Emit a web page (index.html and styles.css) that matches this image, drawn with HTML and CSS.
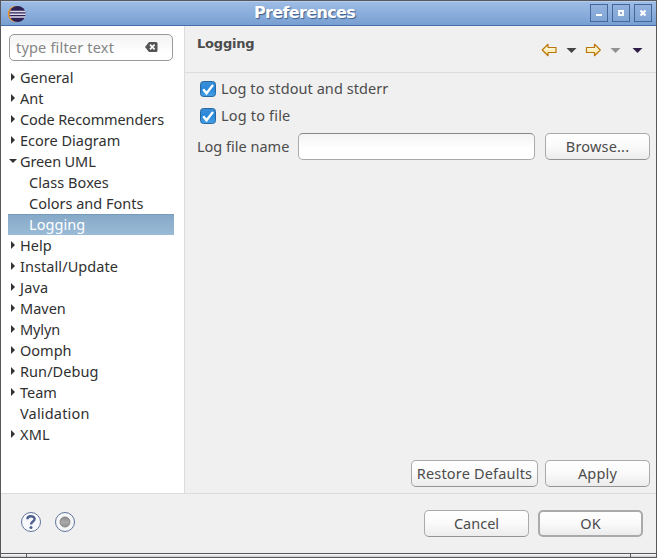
FILE: index.html
```html
<!DOCTYPE html>
<html lang="en">
<head>
<meta charset="utf-8">
<title>Preferences</title>
<link rel="stylesheet" href="styles.css">
</head>
<body>
<div class="window">
  <header class="titlebar">
    <svg class="app-icon" width="20" height="18" viewBox="0 0 20 18"><circle cx="8.800" cy="9" r="8" fill="#e8952f"/><circle cx="10.500" cy="9" r="8.100" fill="#2c2255"/><path d="M3 6.500h15.300M2.500 9.300h16.200M3 12.100h15.300" stroke="#ddd9eb" stroke-width="1.500"/></svg>
    <h1 class="title">Preferences</h1>
    <div class="controls">
      <span class="control"><svg width="16" height="16"><path d="M5 9h6v2H5z" fill="#fff"/></svg></span>
      <span class="control"><svg width="16" height="16"><path d="M6 6h4v4H6z" fill="none" stroke="#f4f8ff" stroke-width="2"/><path d="M5 5h6v1H5z" fill="#fff"/></svg></span>
      <span class="control"><svg width="16" height="16"><path d="M5.500 5.500l5 5M10.500 5.500l-5 5" stroke="#fff" stroke-width="2.200"/></svg></span>
    </div>
  </header>
  <main class="body">
    <nav class="sidebar">
      <div class="filter"><span class="filter-text">type filter text</span><svg width="13" height="10" viewBox="0 0 13 10"><path d="M4 0h7q1.500 0 1.500 1.500v7q0 1.500-1.500 1.500H4L0 5z" fill="#555"/><path d="M5 2.700l4.600 4.600M9.600 2.700L5 7.300" stroke="#fff" stroke-width="1.700"/></svg></div>
      <ul class="tree">
        <li class="row closed"><span>General</span></li>
        <li class="row closed"><span class="loose">Ant</span></li>
        <li class="row closed"><span class="tight">Code Recommenders</span></li>
        <li class="row closed"><span>Ecore Diagram</span></li>
        <li class="row open"><span class="tight">Green UML</span></li>
        <li class="row child"><span class="loose">Class Boxes</span></li>
        <li class="row child"><span>Colors and Fonts</span></li>
        <li class="row child selected"><span class="loose">Logging</span></li>
        <li class="row closed"><span>Help</span></li>
        <li class="row closed"><span class="loose">Install/Update</span></li>
        <li class="row closed"><span class="looser">Java</span></li>
        <li class="row closed"><span>Maven</span></li>
        <li class="row closed"><span class="tight">Mylyn</span></li>
        <li class="row closed"><span>Oomph</span></li>
        <li class="row closed"><span class="loose">Run/Debug</span></li>
        <li class="row closed"><span>Team</span></li>
        <li class="row"><span class="looser">Validation</span></li>
        <li class="row closed"><span class="looser">XML</span></li>
      </ul>
    </nav>
    <section class="page">
      <div class="page-head">
        <h2 class="page-title">Logging</h2>
        <svg class="history" width="104" height="14" viewBox="0 0 104 14">
          <defs><linearGradient id="gold" x1="0" y1="0" x2="0" y2="1"><stop offset="0" stop-color="#fffef5"/><stop offset="1" stop-color="#ffe594"/></linearGradient></defs>
          <path d="M1.200 7L7 1.300V4.500h8v5H7v3.200z" fill="url(#gold)" stroke="#b9770b" stroke-width="1.200" stroke-linejoin="round"/>
          <path d="M25.500 5h10l-5 5z" fill="#444"/>
          <path d="M59.300 7L53.500 1.300V4.500H45.500v5h8v3.200z" fill="url(#gold)" stroke="#b9770b" stroke-width="1.200" stroke-linejoin="round"/>
          <path d="M69.500 5h10l-5 5z" fill="#929292"/>
          <path d="M91.500 5h10l-5 5z" fill="#2f1d45"/>
        </svg>
      </div>
      <div class="form">
        <div class="check"><svg width="16" height="16" viewBox="0 0 16 16"><use href="#tick"/></svg><span class="loose">Log to stdout and stderr</span></div>
        <div class="check second"><svg width="16" height="16" viewBox="0 0 16 16"><defs><linearGradient id="blue" x1="0" y1="0" x2="0" y2="1"><stop offset="0" stop-color="#3c8fd8"/><stop offset=".5" stop-color="#2788d9"/><stop offset="1" stop-color="#48a0e5"/></linearGradient><g id="tick"><rect x=".5" y=".5" width="15" height="15" rx="3" fill="url(#blue)" stroke="#28679f"/><path d="M3.200 8.300l3.300 4L13 4" fill="none" stroke="#fff" stroke-width="2.300"/></g></defs><use href="#tick"/></svg><span class="looser">Log to file</span></div>
        <div class="file-row"><span class="file-label">Log file name</span><div class="input"></div><div class="button"><span class="looser">Browse...</span></div></div>
      </div>
      <div class="page-actions"><div class="button wide"><span class="looser">Restore Defaults</span></div><div class="button"><span class="looser">Apply</span></div></div>
    </section>
  </main>
  <footer class="footer">
    <svg class="help" width="56" height="22" viewBox="0 0 56 22">
      <defs><linearGradient id="ball" x1="0" y1="0" x2="0" y2="1"><stop offset="0" stop-color="#8b8b8b"/><stop offset=".5" stop-color="#aaa"/><stop offset="1" stop-color="#929292"/></linearGradient></defs>
      <circle cx="11" cy="11" r="9.500" fill="#f8f9fc" stroke="#61749c"/><path d="M7.400 8.200C7.400 4.300 14.600 4.300 14.600 8C14.600 10.500 11 10.500 11 13.500" fill="none" stroke="#4d6090" stroke-width="2.400"/><circle cx="11" cy="16.500" r="1.500" fill="#4d6090"/>
      <circle cx="45" cy="11" r="9.500" fill="#f5f6f8" stroke="#61749c"/><circle cx="45" cy="11" r="5" fill="url(#ball)" stroke="#777" stroke-width=".8"/>
    </svg>
    <div class="dialog-actions"><div class="button"><span>Cancel</span></div><div class="button default"><span>OK</span></div></div>
  </footer>
  <div class="resize"><i></i><i></i><i></i></div>
</div>
</body>
</html>
```
FILE: styles.css
```css
* { box-sizing: border-box; }
body { margin: 0; font: 14.5px/21px "Noto Sans", sans-serif; color: #4c4c4c; }
svg { display: block; flex: none; }
h1, h2, ul { margin: 0; padding: 0; }
span { white-space: nowrap; }
.tight { letter-spacing: -0.12px; }
.loose { letter-spacing: 0.07px; }
.looser { letter-spacing: 0.18px; }
.window { width: 657px; height: 558px; border: 1px solid #58585c; background: #f0f0f0; display: flex; flex-direction: column; overflow: hidden; }
.titlebar { height: 25px; flex: none; display: grid; grid-template-columns: 85px 1fr 133px; align-items: center; background: linear-gradient(#9dbce5, #789fd2); border-top: 1px solid #b4cdee; border-bottom: 1px solid #4870a8; }
.app-icon { margin-left: 6px; }
.title { font: bold 16px/22px "DejaVu Sans", sans-serif; letter-spacing: -0.65px; color: #fff; text-align: center; text-shadow: 1px 1px 1px #405f8d; margin-top: -2px; }
.controls { display: flex; gap: 4px; justify-content: flex-end; padding-right: 4px; margin-top: -1px; }
.control { width: 18px; height: 18px; border: 1px solid #45689c; background: linear-gradient(#93b3df, #7fa4d5); }
.body { height: 468px; flex: none; display: flex; border-bottom: 1px solid #dcdcdc; }
.sidebar { width: 184px; background: #fff; border-right: 1px solid #dcdcdc; padding: 8px 10px 0 7px; }
.filter { margin: 0 1px 6px; height: 27px; width: 164px; border: 1px solid #999; border-radius: 5px; background: linear-gradient(#f3f3f3, #fff 70%); display: flex; align-items: center; justify-content: space-between; padding: 0 14px 1px 6px; color: #858585; }
.filter-text { letter-spacing: 0.18px; }
.tree { list-style: none; color: #303030; }
.row { height: 21px; padding-left: 12px; display: flex; align-items: center; position: relative; }
.row.closed::before { content: ""; position: absolute; left: 3px; top: 6px; border: 4px solid transparent; border-left-color: #333; border-right: 0; }
.row.open::before { content: ""; position: absolute; left: 1px; top: 8px; border: 4px solid transparent; border-top-color: #333; border-bottom: 0; }
.row.child { padding-left: 21px; }
.row.selected { background: linear-gradient(#769bbd 1px, #86a9c8 1px, #9abbd7); color: #fff; }
.page { flex: 1; display: flex; flex-direction: column; }
.page-head { height: 47px; flex: none; border-bottom: 1px solid #dcdcdc; display: flex; justify-content: space-between; padding: 7px 11px 0 12px; }
.page-title { font: bold 13px/21px "DejaVu Sans", sans-serif; letter-spacing: -0.2px; }
.history { margin-top: 10px; }
.form { padding: 4px 6px 0 12px; flex: 1; }
.check { height: 23px; display: flex; align-items: center; gap: 5px; padding-left: 3px; }
.second { margin-top: 4px; }
.file-row { margin-top: 6px; display: flex; align-items: center; }
.file-label { width: 101px; }
.input { width: 237px; height: 27px; margin-right: 10px; border: 1px solid #aaa; border-top-color: #888; border-radius: 5px; background: linear-gradient(#f4f4f4, #fff 60%); }
.button { width: 105px; height: 27px; border: 1px solid #aaa; border-bottom-color: #949494; border-radius: 5px; background: linear-gradient(#fff, #fafafa 50%, #ececec); display: flex; justify-content: center; align-items: center; }
.button.wide { width: 127px; }
.button.default { border: 2px solid #aaa; }
.page-actions { display: flex; justify-content: flex-end; gap: 7px; padding: 0 6px 6px 0; }
.footer { height: 59px; flex: none; display: flex; justify-content: space-between; padding: 16px 13px 0 19px; }
.help { margin-top: 1px; }
.dialog-actions { display: flex; gap: 9px; }
.resize { height: 4px; flex: none; display: grid; grid-template-columns: 25px 1fr 26px; border-top: 1px solid #58585c; background: linear-gradient(#fff, #ccc); }
.resize i + i { border-left: 1px solid #58585c; }
```
